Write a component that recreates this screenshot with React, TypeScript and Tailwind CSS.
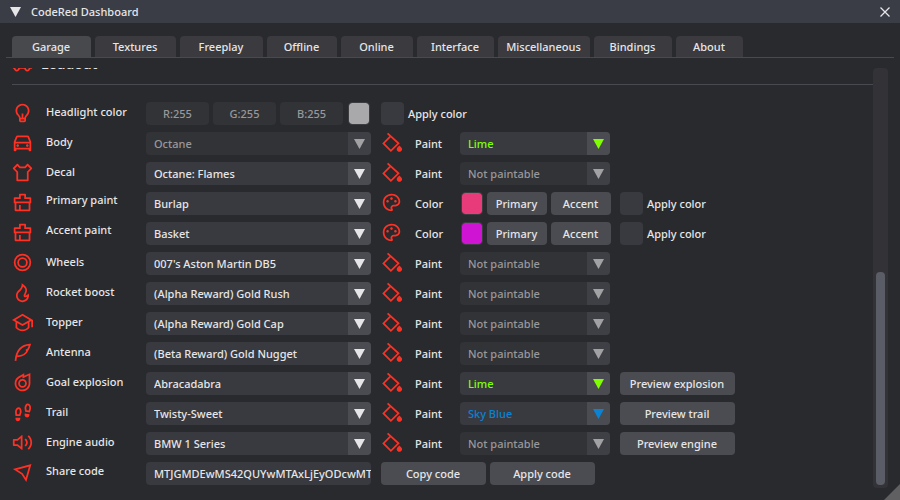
import type { ComponentType, ReactNode } from 'react';
import {
  RiBrush3Line,
  RiCarLine,
  RiFireLine,
  RiFootprintLine,
  RiGraduationCapLine,
  RiLightbulbLine,
  RiMeteorLine,
  RiPaletteLine,
  RiTruckLine,
  RiTShirtLine,
  RiVolumeUpLine,
} from 'react-icons/ri';

type Icon = ComponentType<{ className?: string }>;

const WheelIcon: Icon = ({ className }) => (
  <svg viewBox="0 0 24 24" fill="none" stroke="currentColor" strokeWidth="2" className={className}>
    <circle cx="12" cy="12" r="9" />
    <circle cx="12" cy="12" r="5" />
  </svg>
);

const FeatherIcon: Icon = ({ className }) => (
  <svg viewBox="0 0 24 24" fill="none" stroke="currentColor" strokeWidth="2" className={className}>
    <path d="M4 21.500C5 11 10 3.500 20.500 3C19.800 5.500 19.200 7 18.200 8.500L16 9.500H17.800C16.500 13 13 16 6 16.500" />
  </svg>
);

const SendIcon: Icon = ({ className }) => (
  <svg viewBox="0 0 24 24" fill="none" stroke="currentColor" strokeWidth="2" className={className}>
    <path d="M3.500 8.500L20.800 3.800L16 20.500L11.500 13.500z" />
  </svg>
);

const BucketIcon: Icon = ({ className }) => (
  <svg viewBox="0 0 24 24" fill="none" stroke="currentColor" strokeWidth="2" className={className}>
    <path d="M7.500 1.500L20 13L11.300 21.500L2.800 13L11.300 4.500" />
    <path d="M21 15.500l2 2a2.900 2.900 0 1 1-4 0z" fill="currentColor" stroke="none" />
  </svg>
);

const tabs = [
  ['Garage', 'w-[79px]'],
  ['Textures', 'w-[81px]'],
  ['Freeplay', 'w-[83px]'],
  ['Offline', 'w-[70px]'],
  ['Online', 'w-[72px]'],
  ['Interface', 'w-[77px]'],
  ['Miscellaneous', 'w-[92px]'],
  ['Bindings', 'w-[78px]'],
  ['About', 'w-[67px]'],
];

function Arrow() {
  return (
    <svg viewBox="0 0 11 10" className="h-[10px] w-[11px]" fill="currentColor" aria-hidden="true">
      <path d="M0 0h11L5.500 10z" />
    </svg>
  );
}

function Select({ label, value, width, tone = 'text-[#e6e6e8]', disabled = false }: { label: string; value: string; width: string; tone?: string; disabled?: boolean }) {
  return (
    <div className={`relative h-[23px] shrink-0 overflow-hidden rounded ${width} ${disabled ? 'bg-[#323337] text-[#98989b]' : `bg-[#393a3f] ${tone}`}`}>
      <select aria-label={label} disabled={disabled} className="block h-full w-full appearance-none bg-transparent pr-6 pl-2 leading-[23px] opacity-100 outline-none">
        <option>{value}</option>
      </select>
      <span className={`pointer-events-none absolute inset-y-0 right-0 flex w-[23px] items-center justify-center ${disabled ? 'bg-[#3f4045] text-[#a2a2a5]' : 'bg-[#4b4c51]'}`}>
        <Arrow />
      </span>
    </div>
  );
}

function Button({ children, width }: { children: ReactNode; width: string }) {
  return (
    <button type="button" className={`h-[23px] shrink-0 rounded bg-[#4b4c51] pt-0.5 pr-px whitespace-nowrap ${width}`}>
      {children}
    </button>
  );
}

function ApplyColor() {
  return (
    <label className="flex shrink-0 items-center gap-1">
      <input type="checkbox" className="size-[23px] appearance-none rounded bg-[#393a3f] checked:bg-[#4b4c51]" />
      <span className="leading-[23px]">Apply color</span>
    </label>
  );
}

function Swatch({ label, value, disabled = false }: { label: string; value: string; disabled?: boolean }) {
  return (
    <input
      type="color"
      aria-label={label}
      defaultValue={value}
      disabled={disabled}
      className="ml-px h-[23px] w-[22px] shrink-0 appearance-none overflow-hidden rounded border border-[#3c3d41] bg-transparent p-0 [&::-webkit-color-swatch]:rounded-[3px] [&::-webkit-color-swatch]:border-0 [&::-webkit-color-swatch-wrapper]:p-0"
    />
  );
}

function Row({ icon: RowIcon, label, leading = 'leading-5', children }: { icon: Icon; label: string; leading?: string; children: ReactNode }) {
  return (
    <div className="flex h-[23px] items-center gap-2.5">
      <div className="flex h-full w-[124px] shrink-0 items-start gap-[13px]">
        <RowIcon className="size-[21px] shrink-0 text-[#ff3125]" />
        <span className={`whitespace-nowrap ${leading}`}>{label}</span>
      </div>
      {children}
    </div>
  );
}

function Attribute({ icon: AttributeIcon, label }: { icon: Icon; label: string }) {
  return (
    <div className="flex h-[23px] w-[69px] shrink-0 items-start gap-[13px]">
      <AttributeIcon className="size-[21px] shrink-0 text-[#ff3125]" />
      <span className="leading-[23px]">{label}</span>
    </div>
  );
}

type Item = {
  icon: Icon;
  label: string;
  value: string;
  disabled?: boolean;
  paint?: string;
  tone?: string;
  color?: string;
  preview?: string;
};

const items: Item[] = [
  { icon: RiCarLine, label: 'Body', value: 'Octane', disabled: true, paint: 'Lime', tone: 'text-[#7fff00]' },
  { icon: RiTShirtLine, label: 'Decal', value: 'Octane: Flames' },
  { icon: RiBrush3Line, label: 'Primary paint', value: 'Burlap', color: '#e73c79' },
  { icon: RiBrush3Line, label: 'Accent paint', value: 'Basket', color: '#cf15d3' },
  { icon: WheelIcon, label: 'Wheels', value: "007's Aston Martin DB5" },
  { icon: RiFireLine, label: 'Rocket boost', value: '(Alpha Reward) Gold Rush' },
  { icon: RiGraduationCapLine, label: 'Topper', value: '(Alpha Reward) Gold Cap' },
  { icon: FeatherIcon, label: 'Antenna', value: '(Beta Reward) Gold Nugget' },
  { icon: RiMeteorLine, label: 'Goal explosion', value: 'Abracadabra', paint: 'Lime', tone: 'text-[#7fff00]', preview: 'Preview explosion' },
  { icon: RiFootprintLine, label: 'Trail', value: 'Twisty-Sweet', paint: 'Sky Blue', tone: 'text-[#0b82d2]', preview: 'Preview trail' },
  { icon: RiVolumeUpLine, label: 'Engine audio', value: 'BMW 1 Series', preview: 'Preview engine' },
];

export default function App() {
  return (
    <div className="relative flex h-screen w-full flex-col overflow-hidden bg-[#292a2d] font-['Noto_Sans',sans-serif] text-[11px] font-medium text-[#e6e6e8]">
      <header className="flex h-[23px] shrink-0 items-center bg-[#3b3d46] px-2.5">
        <button type="button" aria-label="Collapse" className="mr-2.5">
          <Arrow />
        </button>
        <h1 className="flex-1 pt-0.5">CodeRed Dashboard</h1>
        <button type="button" aria-label="Close">
          <svg viewBox="0 0 10 10" className="size-[10px]" fill="none" stroke="currentColor" strokeWidth="1.3">
            <path d="M.5.5l9 9M9.500.5l-9 9" />
          </svg>
        </button>
      </header>

      <nav className="mx-1.5 mt-[13px] flex shrink-0 gap-1 border-b border-[#4a4951] px-1.5">
        {tabs.map(([name, width], i) => (
          <button key={name} type="button" className={`h-[21px] rounded-t pt-0.5 pr-px ${width} ${i === 0 ? 'bg-[#48494d]' : 'bg-[#3b3a3f]'}`}>
            {name}
          </button>
        ))}
      </nav>

      <main className="mx-3 mt-2.5 mb-3 flex min-h-0 flex-1">
        <div className="flex min-w-0 flex-1 flex-col justify-end overflow-hidden pb-[3px]">
          <div className="flex items-end gap-2 border-b border-[#484951] pb-2.5">
            <RiTruckLine className="size-[21px] text-[#ff3125]" />
            <h2 className="text-sm leading-5 font-semibold">Loadout</h2>
          </div>

          <div className="mt-[17px] flex flex-col gap-[7px]">
            <Row icon={RiLightbulbLine} label="Headlight color">
              <div className="flex w-[225px] shrink-0 gap-1">
                {['R:255', 'G:255', 'B:255'].map((channel) => (
                  <input key={channel} aria-label={`Headlight ${channel[0]}`} defaultValue={channel} disabled className="h-[23px] w-[63px] rounded bg-[#323337] text-center text-[#98989b]" />
                ))}
                <Swatch label="Headlight color" value="#a9a9ab" disabled />
              </div>
              <ApplyColor />
            </Row>

            {items.map((item) => (
              <Row key={item.label} icon={item.icon} label={item.label} leading={item.color ? 'leading-4' : undefined}>
                <Select label={item.label} value={item.value} disabled={item.disabled} width="w-[225px]" />
                {item.color ? (
                  <>
                    <Attribute icon={RiPaletteLine} label="Color" />
                    <div className="flex w-[150px] shrink-0 gap-1">
                      <Swatch label={`${item.label} color`} value={item.color} />
                      <Button width="w-[60px]">Primary</Button>
                      <Button width="w-[60px]">Accent</Button>
                    </div>
                    <ApplyColor />
                  </>
                ) : (
                  <>
                    <Attribute icon={BucketIcon} label="Paint" />
                    <Select label={`${item.label} paint`} value={item.paint ?? 'Not paintable'} tone={item.tone} disabled={!item.paint} width="w-[150px]" />
                  </>
                )}
                {item.preview && <Button width="w-[115px]">{item.preview}</Button>}
              </Row>
            ))}

            <Row icon={SendIcon} label="Share code" leading="leading-[18px]">
              <input aria-label="Share code" defaultValue="MTJGMDEwMS42QUYwMTAxLjEyODcwMT" className="h-[23px] w-[225px] shrink-0 rounded bg-[#393a3f] pl-2 outline-none" />
              <div className="flex gap-1">
                <Button width="w-[105px]">Copy code</Button>
                <Button width="w-[105px]">Apply code</Button>
              </div>
            </Row>
          </div>
        </div>

        <div className="flex w-[15px] shrink-0 flex-col rounded bg-[#333236] p-[3px]">
          <div className="flex-[18]" />
          <div className="flex-[19] rounded bg-[#5a5c66]" />
        </div>
      </main>

      <svg viewBox="0 0 16 16" className="absolute right-0 bottom-0 size-4 text-[#606062]" fill="currentColor" aria-hidden="true">
        <path d="M16 0v16H0z" />
      </svg>
    </div>
  );
}
